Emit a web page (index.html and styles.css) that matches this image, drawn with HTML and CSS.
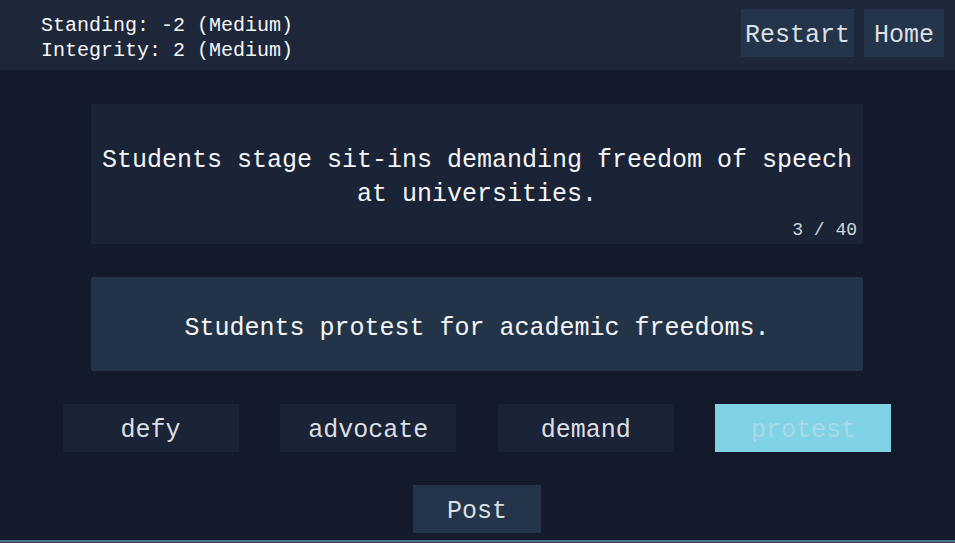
FILE: index.html
```html
<!DOCTYPE html>
<html>
<head>
<meta charset="utf-8">
<link rel="stylesheet" href="styles.css">
</head>
<body>
<header class="topbar">
  <div class="stats">
    <div>Standing: -2 (Medium)</div>
    <div>Integrity: 2 (Medium)</div>
  </div>
  <nav class="nav">
    <button class="navbtn">Restart</button>
    <button class="navbtn">Home</button>
  </nav>
</header>
<main class="main">
  <section class="headline">
    <p class="headline-text">Students stage sit-ins demanding freedom of speech at universities.</p>
    <span class="counter">3 / 40</span>
  </section>
  <section class="draft">
    <p class="draft-text">Students protest for academic freedoms.</p>
  </section>
  <div class="choices">
    <button class="choice">defy</button>
    <button class="choice">advocate</button>
    <button class="choice">demand</button>
    <button class="choice selected">protest</button>
  </div>
  <button class="post">Post</button>
</main>
<div class="bottomline"></div>
</body>
</html>
```
FILE: styles.css
```css
html, body {
  margin: 0;
  padding: 0;
}
body {
  width: 955px;
  height: 543px;
  overflow: hidden;
  background: #131a2b;
  color: #f3f4f6;
  font-family: "Liberation Mono", "DejaVu Sans Mono", monospace;
  position: relative;
}
button {
  font-family: inherit;
  border: none;
  cursor: pointer;
}
.topbar {
  height: 70px;
  background: #1e2639;
  display: flex;
  align-items: center;
  justify-content: space-between;
  padding: 0 11px 0 41px;
  box-sizing: border-box;
}
.stats {
  font-size: 20px;
  line-height: 25px;
  color: #f7f7f7;
  margin-top: 5px;
}
.nav {
  display: flex;
  gap: 10px;
  align-items: flex-start;
  margin-top: -4px;
}
.navbtn {
  height: 48px;
  background: #23344b;
  color: #dcdfe4;
  font-size: 25px;
  padding: 5px 3px 0;
}
.navbtn:nth-child(1) { width: 113px; }
.navbtn:nth-child(2) { width: 80px; }
.main {
  display: flex;
  flex-direction: column;
  align-items: center;
  gap: 33px;
  padding-top: 34px;
  padding-right: 1px;
}
.headline {
  width: 772px;
  height: 140px;
  background: #1b2337;
  border-radius: 2px;
  position: relative;
  display: flex;
  align-items: center;
  justify-content: center;
  box-sizing: border-box;
  padding-top: 8px;
}
.headline-text {
  margin: 0;
  font-size: 25px;
  line-height: 34px;
  text-align: center;
  color: #f5f5f5;
}
.counter {
  position: absolute;
  right: 6px;
  bottom: 5px;
  font-size: 18px;
  line-height: 18px;
  color: #d5d8dd;
}
.draft {
  width: 772px;
  height: 94px;
  background: #233449;
  border-radius: 2px;
  display: flex;
  align-items: center;
  justify-content: center;
  padding-top: 10px;
  box-sizing: border-box;
}
.draft-text {
  margin: 0;
  font-size: 25px;
  line-height: 34px;
  color: #f5f5f5;
}
.choices {
  width: 829px;
  display: flex;
  justify-content: space-between;
}
.choice {
  width: 176px;
  height: 48px;
  background: #1b2336;
  color: #dcdfe4;
  font-size: 25px;
  padding-top: 6px;
}
.choice.selected {
  background: #7fd3e5;
  color: #a9d9e5;
}
.post {
  width: 128px;
  height: 48px;
  background: #23344b;
  color: #dcdfe4;
  font-size: 25px;
  padding-top: 6px;
}
.bottomline {
  position: absolute;
  left: 0;
  right: 0;
  bottom: 0;
  height: 3px;
  background: #4a7396;
  border-bottom: 1px solid #3a3f48;
  box-sizing: border-box;
}
```
